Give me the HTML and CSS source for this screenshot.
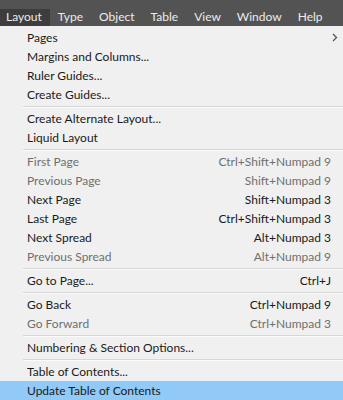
FILE: index.html
```html
<!DOCTYPE html>
<html lang="en">
<head>
    <meta charset="UTF-8">
    <title>Layout Menu</title>
    <link rel="stylesheet" href="styles.css">
</head>
<body>
    <div class="menubar">
        <span class="menubar-item active">Layout</span>
        <span class="menubar-item">Type</span>
        <span class="menubar-item">Object</span>
        <span class="menubar-item">Table</span>
        <span class="menubar-item">View</span>
        <span class="menubar-item">Window</span>
        <span class="menubar-item">Help</span>
    </div>

    <div class="menu">
        <div class="item">
            <span>Pages</span>
            <svg class="chevron" width="6" height="9" viewBox="0 0 6 9"><path d="M1 1 L4.5 4.5 L1 8" fill="none" stroke="#555" stroke-width="1.3"/></svg>
        </div>
        <div class="item"><span>Margins and Columns...</span></div>
        <div class="item"><span>Ruler Guides...</span></div>
        <div class="item"><span>Create Guides...</span></div>
        <div class="sep"></div>
        <div class="item"><span>Create Alternate Layout...</span></div>
        <div class="item"><span>Liquid Layout</span></div>
        <div class="sep"></div>
        <div class="item disabled"><span>First Page</span><span class="key">Ctrl+Shift+Numpad 9</span></div>
        <div class="item disabled"><span>Previous Page</span><span class="key">Shift+Numpad 9</span></div>
        <div class="item"><span>Next Page</span><span class="key">Shift+Numpad 3</span></div>
        <div class="item"><span>Last Page</span><span class="key">Ctrl+Shift+Numpad 3</span></div>
        <div class="item"><span>Next Spread</span><span class="key">Alt+Numpad 3</span></div>
        <div class="item disabled"><span>Previous Spread</span><span class="key">Alt+Numpad 9</span></div>
        <div class="sep"></div>
        <div class="item"><span>Go to Page...</span><span class="key">Ctrl+J</span></div>
        <div class="sep"></div>
        <div class="item"><span>Go Back</span><span class="key">Ctrl+Numpad 9</span></div>
        <div class="item disabled"><span>Go Forward</span><span class="key">Ctrl+Numpad 3</span></div>
        <div class="sep"></div>
        <div class="item"><span>Numbering &amp; Section Options...</span></div>
        <div class="sep"></div>
        <div class="item"><span>Table of Contents...</span></div>
        <div class="item selected"><span>Update Table of Contents</span></div>
    </div>
</body>
</html>
```

FILE: styles.css
```css
body {
    margin: 0;
    width: 343px;
    height: 400px;
    overflow: hidden;
    background-color: #f0f0f0;
    font-family: Lato, "Noto Sans", sans-serif;
    font-size: 12px;
}
.menubar {
    display: flex;
    align-items: flex-end;
    height: 26px;
    background-color: #535353;
}
.menubar-item {
    height: 17px;
    line-height: 16px;
    padding: 0 8px;
    color: #ececec;
}
.menubar-item.active {
    padding-left: 6px;
    background-color: #3d3d3d;
}
.menu {
    padding-top: 2px;
}
.item {
    display: flex;
    justify-content: space-between;
    align-items: center;
    height: 19px;
    padding: 0 12px 0 27px;
    color: #1a1a1a;
}
.item.disabled {
    color: #6f6f6f;
}
.item.selected {
    background-color: #91c9f7;
}
.chevron {
    margin-right: -7px;
}
.sep {
    height: 1px;
    margin: 2px 0 1px 23px;
    background-color: #d7d7d7;
    border-bottom: 1px solid #fbfbfb;
}
```
